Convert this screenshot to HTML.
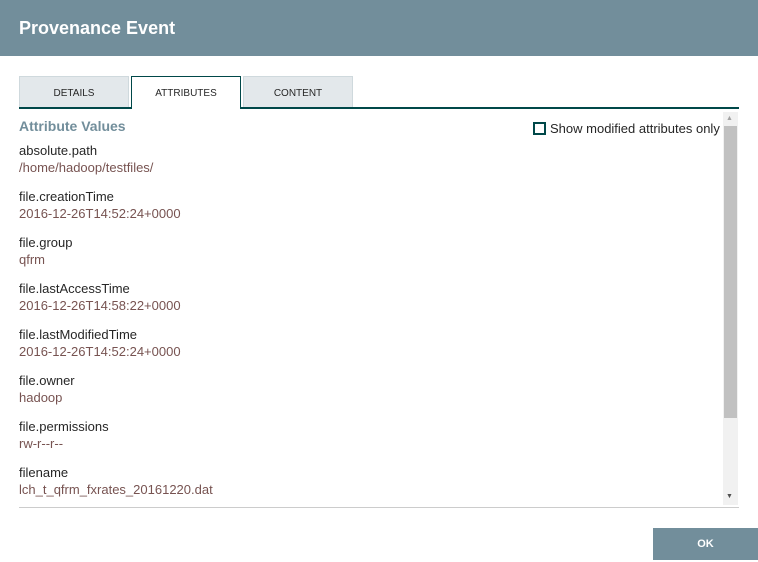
<!DOCTYPE html>
<html><head><style>
body{margin:0;width:758px;height:562px;background:#fff;font-family:"Liberation Sans",sans-serif;position:relative;overflow:hidden}
.hdr{position:absolute;left:0;top:0;width:758px;height:56px;background:#728e9b;color:#fff;font-weight:bold;font-size:18px;line-height:56px;padding-left:19px;box-sizing:border-box}
.tab{position:absolute;top:76px;width:110px;height:32px;box-sizing:border-box;background:#e3e8eb;border:1px solid #cfd9dd;border-bottom:none;font-size:10px;text-align:center;line-height:33px;color:#262626}
.tab.a{background:#fff;border:1px solid #004849;border-bottom:none;height:33px;z-index:2}
.line{position:absolute;left:19px;top:107px;width:720px;height:2px;background:#004849}
.t{position:absolute;left:19px;top:118px;font-weight:bold;font-size:14px;color:#728e9b}
.n{position:absolute;left:19px;font-size:13px;color:#262626}
.v{position:absolute;left:19px;font-size:13px;color:#775351}
.cb{position:absolute;left:533px;top:122px;width:9px;height:9px;border:2px solid #004849}
.cl{position:absolute;left:550px;top:121px;font-size:13px;color:#262626}
.sb{position:absolute;left:723px;top:112px;width:15px;height:393px;background:#f1f1f1}
.th{position:absolute;left:724px;top:126px;width:13px;height:292px;background:#c1c1c1}
.bl{position:absolute;left:19px;top:507px;width:720px;height:1px;background:#ccc}
.ok{position:absolute;left:653px;top:528px;width:105px;height:32px;background:#728e9b;color:#fff;font-weight:bold;font-size:11px;text-align:center;line-height:32px}
</style></head><body>
<div class="hdr">Provenance Event</div>
<div class="tab" style="left:19px">DETAILS</div>
<div class="tab a" style="left:131px">ATTRIBUTES</div>
<div class="tab" style="left:243px">CONTENT</div>
<div class="line"></div>
<div class="t">Attribute Values</div>
<div class="cb"></div><div class="cl">Show modified attributes only</div>
<div class="n" style="top:143px">absolute.path</div><div class="v" style="top:160px">/home/hadoop/testfiles/</div>
<div class="n" style="top:189px">file.creationTime</div><div class="v" style="top:206px">2016-12-26T14:52:24+0000</div>
<div class="n" style="top:235px">file.group</div><div class="v" style="top:252px">qfrm</div>
<div class="n" style="top:281px">file.lastAccessTime</div><div class="v" style="top:298px">2016-12-26T14:58:22+0000</div>
<div class="n" style="top:327px">file.lastModifiedTime</div><div class="v" style="top:344px">2016-12-26T14:52:24+0000</div>
<div class="n" style="top:373px">file.owner</div><div class="v" style="top:390px">hadoop</div>
<div class="n" style="top:419px">file.permissions</div><div class="v" style="top:436px">rw-r--r--</div>
<div class="n" style="top:465px">filename</div><div class="v" style="top:482px">lch_t_qfrm_fxrates_20161220.dat</div>
<div class="sb"></div><div class="th"></div>
<div style="position:absolute;left:726px;top:115px;font-size:7px;color:#a3a3a3">▲</div>
<div style="position:absolute;left:726px;top:493px;font-size:7px;color:#505050">▼</div>
<div class="bl"></div>
<div class="ok">OK</div>
</body></html>
